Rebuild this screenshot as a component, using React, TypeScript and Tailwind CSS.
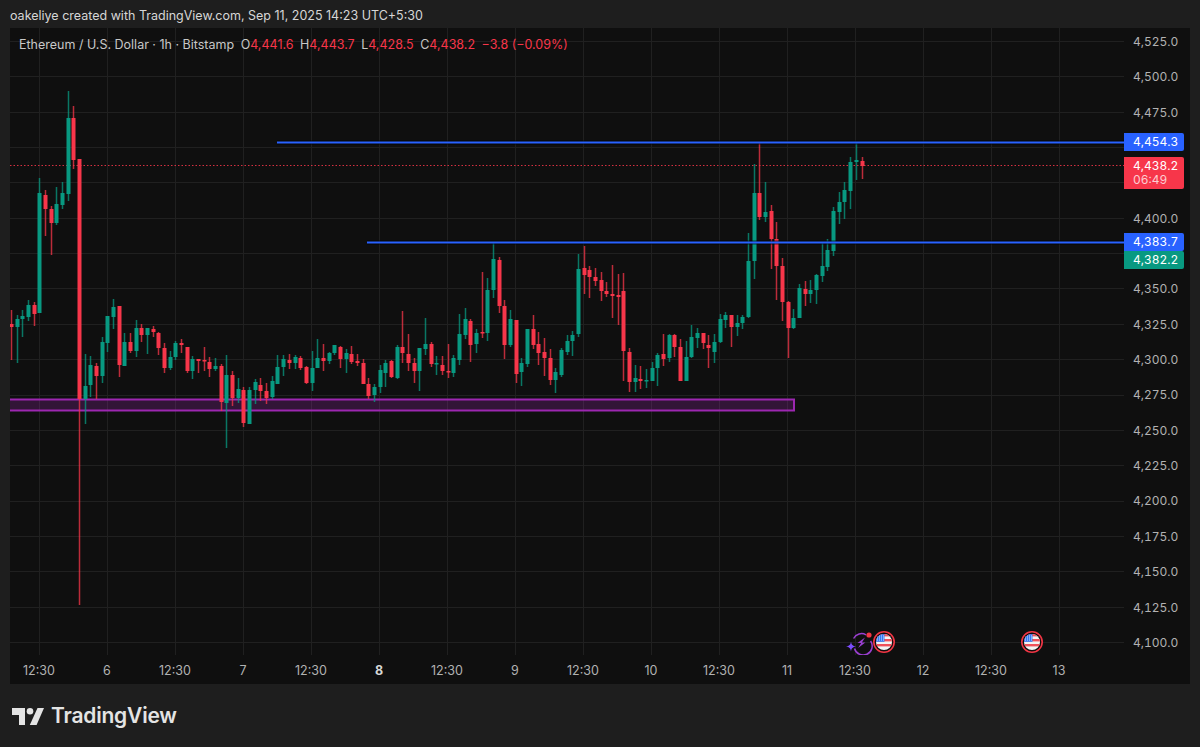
import React from 'react';

type Candle = [number, number, number, number];

const GREEN = '#089981';
const RED = '#f7364a';
const font = "font-['Inter','Liberation_Sans',sans-serif]";

// [body top, body bottom, wick top, wick bottom]; colour comes from the index lists below
const candles: Candle[] = [
  [324, 327, 310, 360], [319, 327, 315, 363], [316, 319, 310, 337], [305, 317, 300, 321], [305, 314, 302, 326],
  [193, 313, 178, 313], [195, 209, 190, 236], [209, 223, 206, 255], [204, 223, 187, 225], [193, 205, 182, 209],
  [118, 194, 91, 201], [118, 160, 106, 169], [159, 399, 159, 605], [386, 399, 354, 424], [365, 385, 356, 397],
  [366, 376, 363, 399], [342, 376, 337, 383], [316, 343, 316, 352], [307, 317, 299, 329], [306, 365, 306, 377],
  [342, 366, 333, 366], [342, 351, 333, 353], [328, 351, 320, 357], [328, 335, 324, 342], [328, 335, 328, 354],
  [329, 332, 326, 337], [333, 348, 332, 355], [348, 368, 343, 373], [357, 368, 351, 370], [343, 357, 341, 360],
  [343, 345, 339, 353], [347, 371, 347, 373], [359, 371, 356, 379], [359, 361, 359, 373], [360, 361, 347, 371],
  [362, 369, 357, 377], [366, 369, 358, 371], [366, 402, 364, 411], [375, 403, 355, 448], [375, 398, 371, 406],
  [389, 398, 378, 403], [390, 423, 387, 427], [390, 424, 387, 424], [382, 390, 379, 404], [385, 391, 378, 401],
  [391, 398, 383, 404], [381, 397, 376, 399], [367, 384, 355, 384], [359, 367, 355, 376], [360, 363, 354, 369],
  [357, 363, 355, 369], [358, 368, 356, 370], [367, 383, 366, 384], [368, 383, 351, 391], [358, 368, 339, 368],
  [358, 361, 344, 371], [353, 361, 352, 364], [345, 353, 345, 355], [347, 359, 346, 368], [353, 359, 349, 373],
  [354, 362, 346, 364], [361, 363, 354, 366], [363, 384, 359, 384], [384, 396, 378, 399], [387, 395, 384, 402],
  [370, 387, 365, 393], [363, 373, 360, 387], [361, 377, 360, 378], [347, 378, 345, 379], [347, 353, 311, 363],
  [354, 363, 334, 371], [363, 371, 358, 383], [348, 371, 348, 391], [344, 349, 318, 355], [344, 364, 342, 367],
  [363, 364, 356, 375], [365, 371, 356, 375], [371, 372, 344, 378], [358, 373, 355, 377], [334, 360, 314, 365],
  [319, 335, 308, 339], [321, 345, 319, 362], [333, 344, 329, 353], [332, 333, 272, 338], [290, 333, 278, 341],
  [259, 290, 243, 298], [260, 306, 257, 313], [306, 345, 300, 359], [319, 345, 310, 347], [320, 374, 320, 383],
  [363, 372, 358, 386], [329, 364, 329, 367], [329, 345, 315, 349], [344, 353, 332, 365], [352, 358, 338, 376],
  [358, 380, 349, 385], [372, 380, 368, 393], [350, 375, 348, 377], [341, 352, 335, 355], [335, 341, 331, 356],
  [269, 334, 254, 337], [268, 275, 246, 294], [270, 277, 266, 298], [277, 281, 268, 286], [280, 291, 272, 301],
  [291, 294, 282, 297], [294, 296, 265, 318], [295, 297, 274, 325], [291, 351, 273, 381], [352, 382, 348, 392],
  [378, 382, 365, 392], [379, 381, 366, 389], [380, 381, 369, 388], [368, 381, 362, 381], [355, 368, 353, 386],
  [354, 359, 334, 366], [335, 358, 334, 362], [335, 347, 334, 357], [347, 381, 339, 381], [357, 381, 341, 381],
  [337, 357, 325, 358], [333, 338, 328, 348], [333, 343, 333, 349], [345, 348, 335, 368], [342, 352, 334, 363],
  [319, 342, 314, 343], [315, 320, 312, 328], [315, 327, 315, 347], [323, 327, 315, 336], [317, 323, 315, 329],
  [261, 317, 233, 318], [193, 261, 164, 279], [193, 217, 143, 220], [212, 217, 182, 222], [211, 239, 205, 269],
  [239, 266, 222, 300], [266, 302, 258, 321], [302, 328, 301, 358], [318, 328, 309, 329], [288, 318, 284, 318],
  [289, 294, 281, 306], [290, 294, 280, 303], [275, 290, 274, 304], [266, 276, 242, 282], [250, 267, 239, 271],
  [211, 251, 207, 256], [202, 212, 192, 224], [190, 202, 182, 219], [162, 191, 157, 209], [160, 162, 143, 180],
  [161, 166, 157, 179],
];

const redIndexes = new Set([
  0, 4, 6, 7, 11, 12, 15, 19, 21, 23, 25, 26, 27, 30, 31, 33, 34, 35, 37, 39, 41, 44, 45, 49, 51, 52, 55, 58, 60, 61,
  62, 63, 67, 69, 70, 71, 74, 76, 77, 81, 83, 86, 87, 89, 92, 93, 94, 95, 101, 102, 103, 104, 105, 106, 107, 108, 109,
  111, 115, 117, 118, 122, 123, 127, 132, 134, 135, 136, 137, 140, 150,
]);

// empty slots sit behind the price tags (4,450 / 4,425 / 4,375)
const priceLabels = [
  '4,525.0', '4,500.0', '4,475.0', '', '', '4,400.0', '', '4,350.0', '4,325.0',
  '4,300.0', '4,275.0', '4,250.0', '4,225.0', '4,200.0', '4,175.0', '4,150.0', '4,125.0', '4,100.0',
];

const timeLabels = ['12:30', '6', '12:30', '7', '12:30', '8', '12:30', '9', '12:30', '10', '12:30', '11', '12:30', '12', '12:30', '13'];

const gridX = timeLabels.map((_, i) => 39 + i * 68);
const gridY = priceLabels.map((_, i) => 41 + i * 35.35);

const UsFlag: React.FC<{ cx: number }> = ({ cx }) => (
  <g>
    <circle cx={cx} cy={642} r={10.2} fill="#0f0f0f" stroke="#f23645" strokeWidth={1.6} />
    <clipPath id={`flag-${cx}`}>
      <circle cx={cx} cy={642} r={8} />
    </clipPath>
    <g clipPath={`url(#flag-${cx})`}>
      <rect x={cx - 8} y={634} width={16} height={16} fill="#f4f4f4" />
      <rect x={cx - 8} y={634} width={16} height={2.4} fill="#f0505a" />
      <rect x={cx - 8} y={639} width={16} height={2.4} fill="#f0505a" />
      <rect x={cx - 8} y={644} width={16} height={2.4} fill="#f0505a" />
      <rect x={cx - 8} y={634} width={8.5} height={7.8} fill="#3179f5" />
      <path
        d={`M${cx - 7} 636h7M${cx - 7} 638h7M${cx - 7} 640h7`}
        stroke="#fff"
        strokeWidth={0.8}
        strokeDasharray="1 1"
      />
    </g>
  </g>
);

const Chart: React.FC = () => (
  <svg viewBox="10 28 1114 627" className="block h-full w-full">
    {gridX.map((x) => (
      <line key={x} x1={x + 0.5} x2={x + 0.5} y1={28} y2={655} stroke="#202020" />
    ))}
    {gridY.map((y) => (
      <line key={y} x1={10} x2={1124} y1={Math.round(y) + 0.5} y2={Math.round(y) + 0.5} stroke="#202020" />
    ))}

    <line x1={10} x2={1124} y1={165.5} y2={165.5} stroke="#f7364a" strokeOpacity={0.85} strokeDasharray="1.5 2" />

    <rect x={8} y={399.5} width={786} height={11} fill="#9c27b0" fillOpacity={0.25} stroke="#9c27b0" strokeWidth={2} />

    {candles.map(([top, bottom, high, low], i) => {
      const x = Math.round(11 + i * 5.67);
      const color = redIndexes.has(i) ? RED : GREEN;
      return (
        <g key={i} fill={color}>
          <rect x={x - 0.25} y={high} width={1.5} height={low - high} fillOpacity={0.75} />
          <rect x={x - 1.5} y={top} width={4} height={Math.max(bottom - top, 1.5)} />
        </g>
      );
    })}

    <line x1={277} x2={1124} y1={142.5} y2={142.5} stroke="#000" strokeWidth={4} strokeOpacity={0.6} />
    <line x1={277} x2={1124} y1={142.5} y2={142.5} stroke="#2962ff" strokeWidth={2} />
    <line x1={367} x2={1124} y1={242.5} y2={242.5} stroke="#000" strokeWidth={4} strokeOpacity={0.6} />
    <line x1={367} x2={1124} y1={242.5} y2={242.5} stroke="#2962ff" strokeWidth={2} />

    <path d="M853.6 638.5A9 9 0 0 1 866 634.8M870.6 641A9 9 0 1 1 854.5 648.5" fill="none" stroke="#9a3fd0" strokeWidth={1.5} />
    <path d="M865 637.5l-7.5 5.5h3.6l-3 5 7.2-5.6h-3.4z" fill="#9a3fd0" />
    <path d="M851 641.5c.6 3.4 1.6 4.4 5 5-3.4.6-4.4 1.6-5 5-.6-3.4-1.6-4.4-5-5 3.4-.6 4.4-1.6 5-5z" fill="#7c4dff" />
    <circle cx={869} cy={635} r={2.6} fill="#f23645" />
    <UsFlag cx={884} />
    <UsFlag cx={1032} />
  </svg>
);

const PriceTag: React.FC<{ top: string; bg: string; children: React.ReactNode }> = ({ top, bg, children }) => (
  <div className={`absolute left-0 w-[60px] rounded-r-[2px] pl-[9px] text-[12px] leading-[18px] tabular-nums text-white ${top} ${bg}`}>{children}</div>
);

export default function App() {
  return (
    <div className={`flex h-[747px] w-[1200px] flex-col overflow-hidden bg-[#1e1e1e] ${font}`}>
      <div className="h-[28px] pl-[10px] pt-[7px] text-[12.5px] leading-[18px] text-[#d6d6d6]">
        oakeliye created with TradingView.com, Sep 11, 2025 14:23 UTC+5:30
      </div>

      <div className="mx-[10px] flex h-[656px] flex-col overflow-hidden bg-[#0f0f0f]">
        <div className="flex h-[627px]">
          <div className="relative w-[1114px]">
            <Chart />
            <div className="absolute left-[9px] top-[8px] flex gap-[6.5px] text-[12.5px] leading-[18px] text-[#c8c8c8]">
              <span>Ethereum / U.S. Dollar · 1h · Bitstamp</span>
              <span>O<span className="text-[#f7364a]">4,441.6</span></span>
              <span>H<span className="text-[#f7364a]">4,443.7</span></span>
              <span>L<span className="text-[#f7364a]">4,428.5</span></span>
              <span>C<span className="text-[#f7364a]">4,438.2</span></span>
              <span className="text-[#f7364a]">−3.8 (−0.09%)</span>
            </div>
          </div>

          <div className="relative w-[66px]">
            <div className="flex flex-col pl-[9px] pt-[5px] text-[12px] leading-[18px] tabular-nums text-[#b2b2b2]">
              {priceLabels.map((label, i) => (
                <div key={i} className="h-[35.35px]">{label}</div>
              ))}
            </div>
            <PriceTag top="top-[105px]" bg="bg-[#2962ff]">4,454.3</PriceTag>
            <div className="absolute left-0 top-[129px] h-[32px] w-[60px] rounded-r-[2px] bg-[#f7364a] pl-[9px] pt-[2px] text-[12px] leading-[14px] tabular-nums text-white">
              <div>4,438.2</div>
              <div className="text-white/75">06:49</div>
            </div>
            <PriceTag top="top-[205px]" bg="bg-[#2962ff]">4,383.7</PriceTag>
            <PriceTag top="top-[223px]" bg="bg-[#089981]">4,382.2</PriceTag>
          </div>
        </div>

        <div className="ml-[-5px] flex h-[29px] items-center pt-[3px] text-[12.5px] leading-[18px] text-[#b2b2b2]">
          {timeLabels.map((label, i) => (
            <div key={i} className={`w-[68px] shrink-0 text-center ${label === '8' ? 'font-bold text-[#d6d6d6]' : ''}`}>
              {label}
            </div>
          ))}
        </div>
      </div>

      <div className="flex items-center gap-[7px] pl-[12px] pt-[20px]">
        <svg viewBox="0 0 32 17" className="h-[17px] w-[32px]" fill="#e4e4e4">
          <path d="M0 0h13v17H7V7H0z" />
          <circle cx="18" cy="3.3" r="3.3" />
          <path d="M25.5 0H32l-7.4 17H17.8z" />
        </svg>
        <span className="text-[21px] font-semibold leading-[24px] tracking-[-0.2px] text-[#e4e4e4]">TradingView</span>
      </div>
    </div>
  );
}
